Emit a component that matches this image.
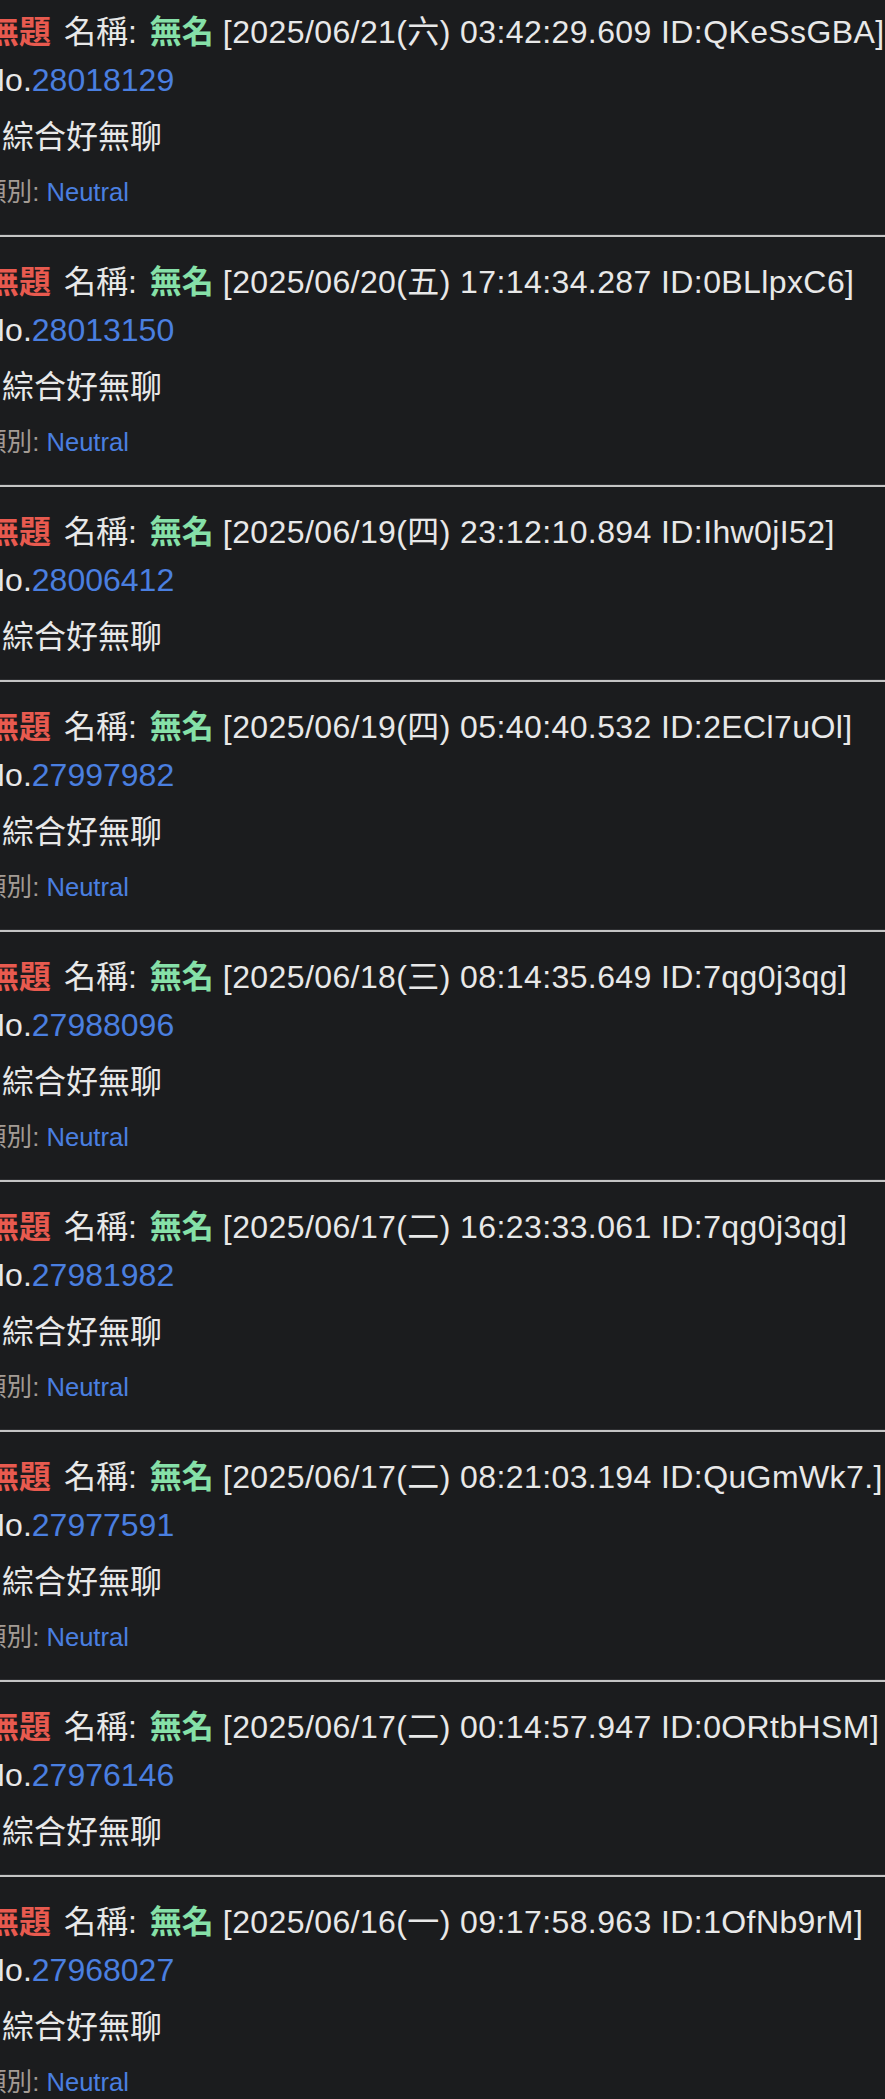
import React from 'react';

interface Post {
    date: string;
    id: string;
    no: string;
    category?: string;
}

const posts: Post[] = [
    { date: '2025/06/21(六) 03:42:29.609', id: 'QKeSsGBA', no: '28018129', category: 'Neutral' },
    { date: '2025/06/20(五) 17:14:34.287', id: '0BLlpxC6', no: '28013150', category: 'Neutral' },
    { date: '2025/06/19(四) 23:12:10.894', id: 'Ihw0jI52', no: '28006412' },
    { date: '2025/06/19(四) 05:40:40.532', id: '2ECl7uOl', no: '27997982', category: 'Neutral' },
    { date: '2025/06/18(三) 08:14:35.649', id: '7qg0j3qg', no: '27988096', category: 'Neutral' },
    { date: '2025/06/17(二) 16:23:33.061', id: '7qg0j3qg', no: '27981982', category: 'Neutral' },
    { date: '2025/06/17(二) 08:21:03.194', id: 'QuGmWk7.', no: '27977591', category: 'Neutral' },
    { date: '2025/06/17(二) 00:14:57.947', id: '0ORtbHSM', no: '27976146' },
    { date: '2025/06/16(一) 09:17:58.963', id: '1OfNb9rM', no: '27968027', category: 'Neutral' },
];

const Separator: React.FC = () => (
    <div>
        <div className="h-[1px] bg-[#2d2e31]" />
        <div className="h-[2px] bg-[#c4c4c4]" />
    </div>
);

const PostItem: React.FC<{ post: Post; first: boolean }> = ({ post, first }) => (
    <div className={first ? 'pt-[8px] pb-[18px]' : 'pt-[21px] pb-[18px]'}>
        <div className="ml-[-13px] whitespace-nowrap leading-[48px]">
            <span className="font-bold text-[#e85a4f]">無題</span>
            <span className="ml-[13px]">名稱: </span>
            <span className="ml-[4px] font-bold text-[#86e0a8]">無名</span>
            <span className="ml-[9px] tracking-[0.4px]">
                [{post.date} ID:{post.id}]
            </span>
        </div>
        <div className="ml-[-18px] leading-[48px]">
            No.<span className="text-[#4a7fe0]">{post.no}</span>
        </div>
        <div className="ml-[2px] mt-[9px] leading-[48px]">綜合好無聊</div>
        {post.category && (
            <div className="ml-[-19px] mt-[7px] text-[25.6px] leading-[48px] text-[#a39b94]">
                類別: <span className="text-[#4a7fe0]">{post.category}</span>
            </div>
        )}
    </div>
);

export default function App() {
    return (
        <div className="min-h-screen w-full overflow-hidden bg-[#1b1c1e] font-['Liberation_Sans','Noto_Sans_CJK_TC',sans-serif] text-[32px] text-[#e8e8e8]">
            {posts.map((post, i) => (
                <React.Fragment key={i}>
                    {i > 0 && <Separator />}
                    <PostItem post={post} first={i === 0} />
                </React.Fragment>
            ))}
        </div>
    );
}
